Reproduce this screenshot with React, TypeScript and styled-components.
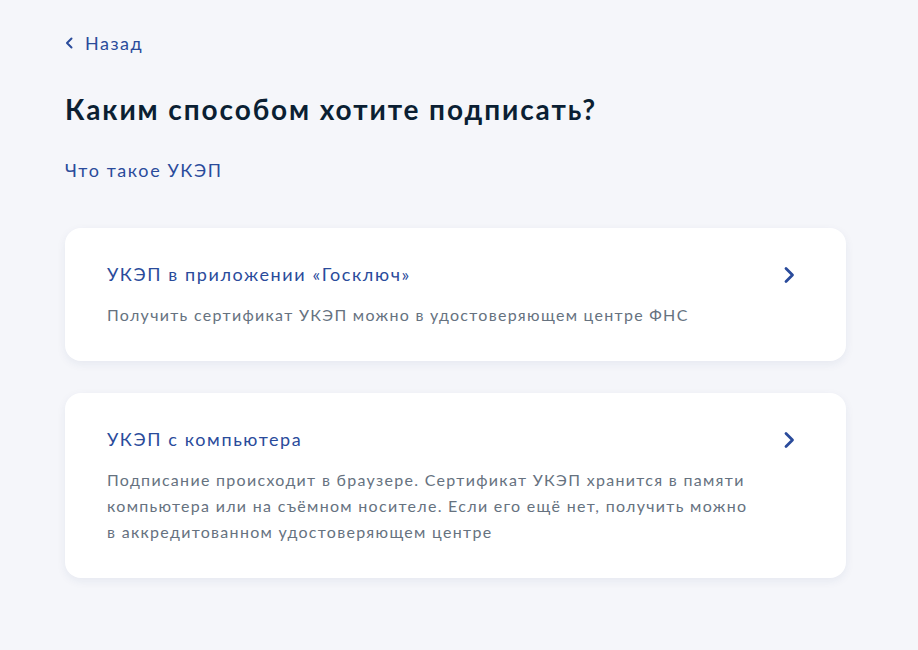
import React from "react";
import styled, { createGlobalStyle } from "styled-components";

const Global = createGlobalStyle`
  html, body { margin: 0; padding: 0; background: #f5f6fa; }
  body { font-family: Lato, "Noto Sans", sans-serif; -webkit-font-smoothing: antialiased; }
`;

const Page = styled.div`
  min-height: 650px;
  box-sizing: border-box;
  padding: 30px 0 0 65px;
  display: flex;
  flex-direction: column;
  width: 846px;
`;

const Back = styled.a`
  display: flex;
  align-items: center;
  gap: 11px;
  color: #2a4b9b;
  font-size: 18px;
  letter-spacing: 1.5px;
  line-height: 26px;
  text-decoration: none;
  cursor: pointer;
`;

const Title = styled.h1`
  margin: 35px 0 0;
  font-size: 28px;
  line-height: 36px;
  font-weight: 700;
  letter-spacing: 1.9px;
  color: #0b1f33;
`;

const Link = styled.a`
  margin-top: 31px;
  color: #2a4b9b;
  font-size: 18px;
  letter-spacing: 1.6px;
  line-height: 24px;
  text-decoration: none;
  cursor: pointer;
`;

const List = styled.div`
  margin-top: 46px;
  display: flex;
  flex-direction: column;
  gap: 32px;
`;

const Card = styled.div`
  background: #fff;
  border-radius: 16px;
  box-shadow: 0 3px 10px rgba(30, 60, 120, 0.07);
  padding: 33px 50px 33px 42px;
  display: flex;
  align-items: flex-start;
  justify-content: space-between;
  gap: 24px;
  cursor: pointer;
`;

const CardBody = styled.div`
  display: flex;
  flex-direction: column;
  gap: 15px;
  max-width: 650px;
`;

const CardTitle = styled.div`
  color: #2a4b9b;
  font-size: 18px;
  letter-spacing: 1.6px;
  line-height: 26px;
`;

const CardText = styled.div`
  color: #66727f;
  font-size: 16px;
  letter-spacing: 1.3px;
  line-height: 26px;
`;

const Chevron = styled.svg`
  flex: none;
  margin-top: 5px;
`;

const ChevronRight = () => (
  <Chevron width="14" height="18" viewBox="0 0 14 18">
    <path d="M4 2.5 L10.5 9 L4 15.5" fill="none" stroke="#2a4b9b" strokeWidth="2.8" strokeLinecap="round" strokeLinejoin="round" />
  </Chevron>
);

const ChevronLeft = () => (
  <svg width="9" height="12" viewBox="0 0 9 12">
    <path d="M6.5 1.5 L2 6 L6.5 10.5" fill="none" stroke="#2a4b9b" strokeWidth="2" strokeLinecap="round" strokeLinejoin="round" />
  </svg>
);

const options = [
  {
    title: "УКЭП в приложении «Госключ»",
    text: "Получить сертификат УКЭП можно в удостоверяющем центре ФНС",
  },
  {
    title: "УКЭП с компьютера",
    text: "Подписание происходит в браузере. Сертификат УКЭП хранится в памяти компьютера или на съёмном носителе. Если его ещё нет, получить можно в аккредитованном удостоверяющем центре",
  },
];

export default function App() {
  return (
    <>
      <Global />
      <Page>
        <Back>
          <ChevronLeft />
          Назад
        </Back>
        <Title>Каким способом хотите подписать?</Title>
        <Link>Что такое УКЭП</Link>
        <List>
          {options.map((o) => (
            <Card key={o.title}>
              <CardBody>
                <CardTitle>{o.title}</CardTitle>
                <CardText>{o.text}</CardText>
              </CardBody>
              <ChevronRight />
            </Card>
          ))}
        </List>
      </Page>
    </>
  );
}
